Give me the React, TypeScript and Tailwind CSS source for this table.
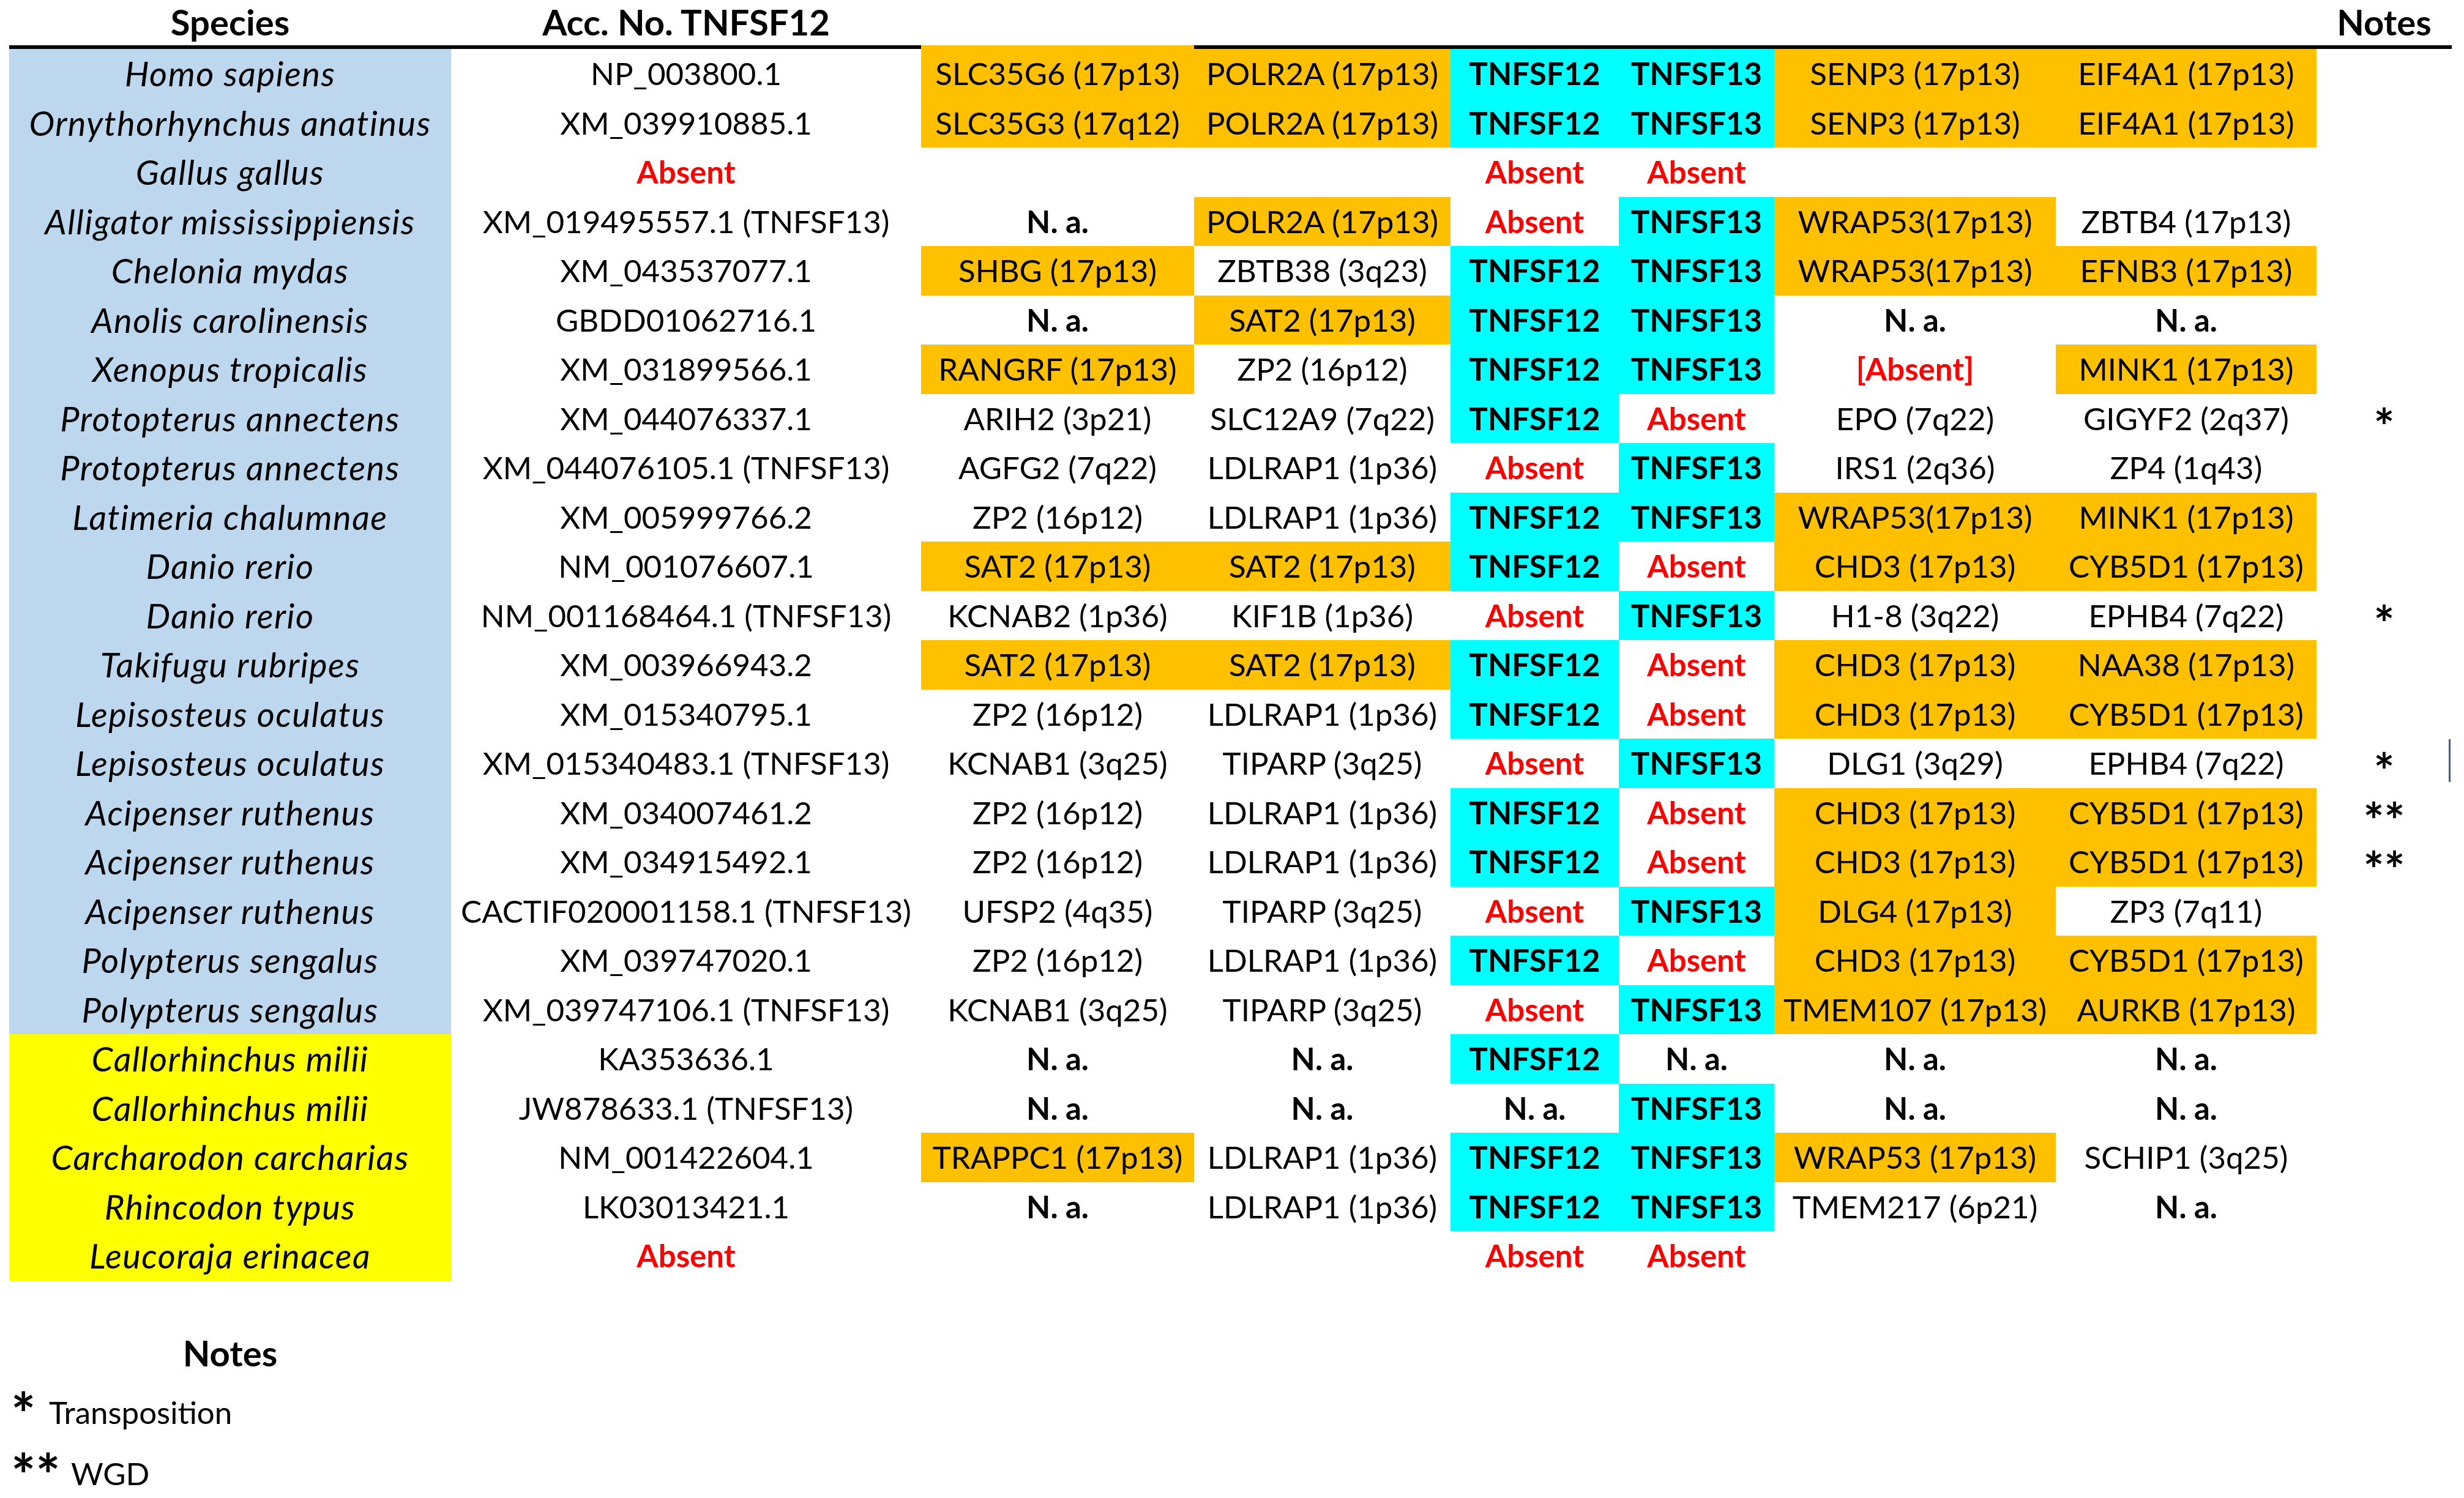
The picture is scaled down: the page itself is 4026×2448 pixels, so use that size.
import React from 'react';

// Synteny table: TNFSF12 / TNFSF13 neighbourhood across vertebrates

type Row = {
  sp: string;
  acc: string;
  cells: string[];
  note?: string;
  shark?: boolean;
  mark?: boolean;
};

// '!' prefix = orange (human 17p13 synteny) fill
const rows: Row[] = [
  { sp: 'Homo sapiens', acc: 'NP_003800.1', cells: ['!SLC35G6 (17p13)', '!POLR2A (17p13)', 'TNFSF12', 'TNFSF13', '!SENP3 (17p13)', '!EIF4A1 (17p13)'] },
  { sp: 'Ornythorhynchus anatinus', acc: 'XM_039910885.1', cells: ['!SLC35G3 (17q12)', '!POLR2A (17p13)', 'TNFSF12', 'TNFSF13', '!SENP3 (17p13)', '!EIF4A1 (17p13)'] },
  { sp: 'Gallus gallus', acc: 'Absent', cells: ['', '', 'Absent', 'Absent', '', ''] },
  { sp: 'Alligator mississippiensis', acc: 'XM_019495557.1 (TNFSF13)', cells: ['N. a.', '!POLR2A (17p13)', 'Absent', 'TNFSF13', '!WRAP53(17p13)', 'ZBTB4 (17p13)'] },
  { sp: 'Chelonia mydas', acc: 'XM_043537077.1', cells: ['!SHBG (17p13)', 'ZBTB38 (3q23)', 'TNFSF12', 'TNFSF13', '!WRAP53(17p13)', '!EFNB3 (17p13)'] },
  { sp: 'Anolis carolinensis', acc: 'GBDD01062716.1', cells: ['N. a.', '!SAT2 (17p13)', 'TNFSF12', 'TNFSF13', 'N. a.', 'N. a.'] },
  { sp: 'Xenopus tropicalis', acc: 'XM_031899566.1', cells: ['!RANGRF (17p13)', 'ZP2 (16p12)', 'TNFSF12', 'TNFSF13', '[Absent]', '!MINK1 (17p13)'] },
  { sp: 'Protopterus annectens', acc: 'XM_044076337.1', cells: ['ARIH2 (3p21)', 'SLC12A9 (7q22)', 'TNFSF12', 'Absent', 'EPO (7q22)', 'GIGYF2 (2q37)'], note: '*' },
  { sp: 'Protopterus annectens', acc: 'XM_044076105.1 (TNFSF13)', cells: ['AGFG2 (7q22)', 'LDLRAP1 (1p36)', 'Absent', 'TNFSF13', 'IRS1 (2q36)', 'ZP4 (1q43)'] },
  { sp: 'Latimeria chalumnae', acc: 'XM_005999766.2', cells: ['ZP2 (16p12)', 'LDLRAP1 (1p36)', 'TNFSF12', 'TNFSF13', '!WRAP53(17p13)', '!MINK1 (17p13)'] },
  { sp: 'Danio rerio', acc: 'NM_001076607.1', cells: ['!SAT2 (17p13)', '!SAT2 (17p13)', 'TNFSF12', 'Absent', '!CHD3 (17p13)', '!CYB5D1 (17p13)'] },
  { sp: 'Danio rerio', acc: 'NM_001168464.1 (TNFSF13)', cells: ['KCNAB2 (1p36)', 'KIF1B (1p36)', 'Absent', 'TNFSF13', 'H1-8 (3q22)', 'EPHB4 (7q22)'], note: '*' },
  { sp: 'Takifugu rubripes', acc: 'XM_003966943.2', cells: ['!SAT2 (17p13)', '!SAT2 (17p13)', 'TNFSF12', 'Absent', '!CHD3 (17p13)', '!NAA38 (17p13)'] },
  { sp: 'Lepisosteus oculatus', acc: 'XM_015340795.1', cells: ['ZP2 (16p12)', 'LDLRAP1 (1p36)', 'TNFSF12', 'Absent', '!CHD3 (17p13)', '!CYB5D1 (17p13)'] },
  { sp: 'Lepisosteus oculatus', acc: 'XM_015340483.1 (TNFSF13)', cells: ['KCNAB1 (3q25)', 'TIPARP (3q25)', 'Absent', 'TNFSF13', 'DLG1 (3q29)', 'EPHB4 (7q22)'], note: '*', mark: true },
  { sp: 'Acipenser ruthenus', acc: 'XM_034007461.2', cells: ['ZP2 (16p12)', 'LDLRAP1 (1p36)', 'TNFSF12', 'Absent', '!CHD3 (17p13)', '!CYB5D1 (17p13)'], note: '**' },
  { sp: 'Acipenser ruthenus', acc: 'XM_034915492.1', cells: ['ZP2 (16p12)', 'LDLRAP1 (1p36)', 'TNFSF12', 'Absent', '!CHD3 (17p13)', '!CYB5D1 (17p13)'], note: '**' },
  { sp: 'Acipenser ruthenus', acc: 'CACTIF020001158.1 (TNFSF13)', cells: ['UFSP2 (4q35)', 'TIPARP (3q25)', 'Absent', 'TNFSF13', '!DLG4 (17p13)', 'ZP3 (7q11)'] },
  { sp: 'Polypterus sengalus', acc: 'XM_039747020.1', cells: ['ZP2 (16p12)', 'LDLRAP1 (1p36)', 'TNFSF12', 'Absent', '!CHD3 (17p13)', '!CYB5D1 (17p13)'] },
  { sp: 'Polypterus sengalus', acc: 'XM_039747106.1 (TNFSF13)', cells: ['KCNAB1 (3q25)', 'TIPARP (3q25)', 'Absent', 'TNFSF13', '!TMEM107 (17p13)', '!AURKB (17p13)'] },
  { sp: 'Callorhinchus milii', acc: 'KA353636.1', cells: ['N. a.', 'N. a.', 'TNFSF12', 'N. a.', 'N. a.', 'N. a.'], shark: true },
  { sp: 'Callorhinchus milii', acc: 'JW878633.1 (TNFSF13)', cells: ['N. a.', 'N. a.', 'N. a.', 'TNFSF13', 'N. a.', 'N. a.'], shark: true },
  { sp: 'Carcharodon carcharias', acc: 'NM_001422604.1', cells: ['!TRAPPC1 (17p13)', 'LDLRAP1 (1p36)', 'TNFSF12', 'TNFSF13', '!WRAP53 (17p13)', 'SCHIP1 (3q25)'], shark: true },
  { sp: 'Rhincodon typus', acc: 'LK03013421.1', cells: ['N. a.', 'LDLRAP1 (1p36)', 'TNFSF12', 'TNFSF13', 'TMEM217 (6p21)', 'N. a.'], shark: true },
  { sp: 'Leucoraja erinacea', acc: 'Absent', cells: ['', '', 'Absent', 'Absent', '', ''], shark: true },
];

const Cell = ({ v }: { v: string }) => {
  let text = v;
  let bg = '';
  let tone = '';
  if (text.startsWith('!')) {
    text = text.slice(1);
    bg = 'bg-[#ffc000]';
  }
  if (text === 'TNFSF12' || text === 'TNFSF13') {
    bg = 'bg-[#00ffff]';
    tone = 'font-bold';
  } else if (text.includes('Absent')) {
    tone = 'font-bold text-[#ff0000]';
  } else if (text === 'N. a.') {
    tone = 'font-bold';
  }
  return (
    <div className={`flex h-[80.5px] items-center justify-center whitespace-nowrap ${bg} ${tone}`}>
      {text}
    </div>
  );
};

export default function App() {
  return (
    <div className="min-h-[2448px] w-[4026px] bg-white font-['Lato','Open_Sans',sans-serif] text-[51px] text-black">
      <div className="ml-[15px] grid grid-cols-[722px_768px_446px_419px_275px_254px_460px_426px_221px]">
        {/* header */}
        <div className="flex h-[80px] items-end justify-center border-b-[6px] border-black pb-[3px] text-[58px] font-bold leading-[1.2]">
          Species
        </div>
        <div className="flex h-[80px] items-end justify-center border-b-[6px] border-black pb-[3px] text-[58px] font-bold leading-[1.2] whitespace-nowrap">
          Acc. No. TNFSF12
        </div>
        <div className="h-[80px] border-b-[6px] border-[#ffc000]" />
        <div className="h-[80px] border-b-[6px] border-black" />
        <div className="h-[80px] border-b-[6px] border-black" />
        <div className="h-[80px] border-b-[6px] border-black" />
        <div className="h-[80px] border-b-[6px] border-black" />
        <div className="h-[80px] border-b-[6px] border-black" />
        <div className="flex h-[80px] items-end justify-center border-b-[6px] border-black pb-[3px] text-[58px] font-bold leading-[1.2]">
          Notes
        </div>

        {rows.map((r, i) => (
          <React.Fragment key={i}>
            <div
              className={`flex h-[80.5px] items-center justify-center whitespace-nowrap text-[56px] italic tracking-[1.5px] ${
                r.shark ? 'bg-[#ffff00]' : 'bg-[#bdd7ee]'
              }`}
            >
              {r.sp}
            </div>
            <Cell v={r.acc} />
            {r.cells.map((c, j) => (
              <Cell key={j} v={c} />
            ))}
            <div className="relative flex h-[80.5px] items-start justify-center pt-[27px] font-bold">
              {r.note && <span className="whitespace-nowrap text-[80px] leading-[50px]">{r.note}</span>}
              {r.mark && <span className="absolute right-[2px] top-[1px] h-[70px] w-[3px] bg-[#3b5ba5]" />}
            </div>
          </React.Fragment>
        ))}
      </div>

      {/* legend */}
      <div className="mt-[83px] ml-[15px] w-[722px] text-center text-[58px] font-bold leading-[1.2]">Notes</div>
      <div className="mt-[32px] flex h-[61px] items-start pl-[18px]">
        <span className="-mt-[15px] w-[62px] shrink-0 whitespace-nowrap text-[95px] font-bold leading-none">*</span>
        <span className="leading-[1.2]">Transposition</span>
      </div>
      <div className="mt-[39px] flex h-[61px] items-start pl-[18px]">
        <span className="-mt-[15px] w-[98px] shrink-0 whitespace-nowrap text-[95px] font-bold leading-none">**</span>
        <span className="leading-[1.2]">WGD</span>
      </div>
    </div>
  );
}
